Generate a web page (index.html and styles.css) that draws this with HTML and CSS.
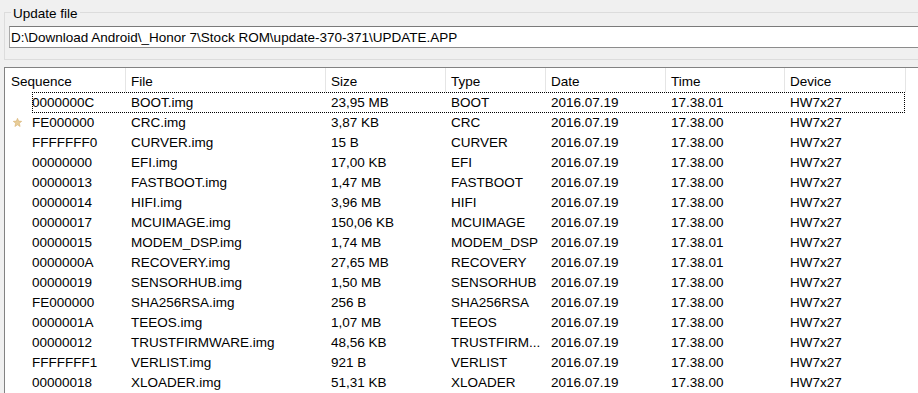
FILE: index.html
```html
<!DOCTYPE html>
<html lang="en">
<head>
  <meta charset="UTF-8" />
  <meta name="viewport" content="width=device-width, initial-scale=1.0"/>
  <title>Update file</title>
  <link rel="stylesheet" href="styles.css">
</head>
<body>
  <fieldset class="file-group">
    <legend>Update file</legend>
    <input type="text" class="file-path" value="D:\Download Android\_Honor 7\Stock ROM\update-370-371\UPDATE.APP" readonly />
  </fieldset>

  <div class="list-view">
    <div class="list-row list-head">
      <div class="col first">Sequence</div>
      <div class="col">File</div>
      <div class="col">Size</div>
      <div class="col">Type</div>
      <div class="col">Date</div>
      <div class="col">Time</div>
      <div class="col">Device</div>
      <div class="col filler"></div>
    </div>

    <div class="list-row focused">
      <div class="col first"><span class="mark"></span>0000000C</div>
      <div class="col">BOOT.img</div>
      <div class="col">23,95 MB</div>
      <div class="col">BOOT</div>
      <div class="col">2016.07.19</div>
      <div class="col">17.38.01</div>
      <div class="col">HW7x27</div>
    </div>
    <div class="list-row">
      <div class="col first">
        <span class="mark">
          <svg width="9" height="9" viewBox="0 0 10 10"><polygon points="5,0.3 6.3,3.4 9.7,3.7 7.1,5.9 7.9,9.5 5,7.6 2.1,9.5 2.9,5.9 0.3,3.7 3.7,3.4" fill="#e8cd98" stroke="#d4ad6c" stroke-width="0.6"/></svg>
        </span>FE000000</div>
      <div class="col">CRC.img</div>
      <div class="col">3,87 KB</div>
      <div class="col">CRC</div>
      <div class="col">2016.07.19</div>
      <div class="col">17.38.00</div>
      <div class="col">HW7x27</div>
    </div>
    <div class="list-row">
      <div class="col first"><span class="mark"></span>FFFFFFF0</div>
      <div class="col">CURVER.img</div>
      <div class="col">15 B</div>
      <div class="col">CURVER</div>
      <div class="col">2016.07.19</div>
      <div class="col">17.38.00</div>
      <div class="col">HW7x27</div>
    </div>
    <div class="list-row">
      <div class="col first"><span class="mark"></span>00000000</div>
      <div class="col">EFI.img</div>
      <div class="col">17,00 KB</div>
      <div class="col">EFI</div>
      <div class="col">2016.07.19</div>
      <div class="col">17.38.00</div>
      <div class="col">HW7x27</div>
    </div>
    <div class="list-row">
      <div class="col first"><span class="mark"></span>00000013</div>
      <div class="col">FASTBOOT.img</div>
      <div class="col">1,47 MB</div>
      <div class="col">FASTBOOT</div>
      <div class="col">2016.07.19</div>
      <div class="col">17.38.00</div>
      <div class="col">HW7x27</div>
    </div>
    <div class="list-row">
      <div class="col first"><span class="mark"></span>00000014</div>
      <div class="col">HIFI.img</div>
      <div class="col">3,96 MB</div>
      <div class="col">HIFI</div>
      <div class="col">2016.07.19</div>
      <div class="col">17.38.00</div>
      <div class="col">HW7x27</div>
    </div>
    <div class="list-row">
      <div class="col first"><span class="mark"></span>00000017</div>
      <div class="col">MCUIMAGE.img</div>
      <div class="col">150,06 KB</div>
      <div class="col">MCUIMAGE</div>
      <div class="col">2016.07.19</div>
      <div class="col">17.38.00</div>
      <div class="col">HW7x27</div>
    </div>
    <div class="list-row">
      <div class="col first"><span class="mark"></span>00000015</div>
      <div class="col">MODEM_DSP.img</div>
      <div class="col">1,74 MB</div>
      <div class="col">MODEM_DSP</div>
      <div class="col">2016.07.19</div>
      <div class="col">17.38.01</div>
      <div class="col">HW7x27</div>
    </div>
    <div class="list-row">
      <div class="col first"><span class="mark"></span>0000000A</div>
      <div class="col">RECOVERY.img</div>
      <div class="col">27,65 MB</div>
      <div class="col">RECOVERY</div>
      <div class="col">2016.07.19</div>
      <div class="col">17.38.01</div>
      <div class="col">HW7x27</div>
    </div>
    <div class="list-row">
      <div class="col first"><span class="mark"></span>00000019</div>
      <div class="col">SENSORHUB.img</div>
      <div class="col">1,50 MB</div>
      <div class="col">SENSORHUB</div>
      <div class="col">2016.07.19</div>
      <div class="col">17.38.00</div>
      <div class="col">HW7x27</div>
    </div>
    <div class="list-row">
      <div class="col first"><span class="mark"></span>FE000000</div>
      <div class="col">SHA256RSA.img</div>
      <div class="col">256 B</div>
      <div class="col">SHA256RSA</div>
      <div class="col">2016.07.19</div>
      <div class="col">17.38.00</div>
      <div class="col">HW7x27</div>
    </div>
    <div class="list-row">
      <div class="col first"><span class="mark"></span>0000001A</div>
      <div class="col">TEEOS.img</div>
      <div class="col">1,07 MB</div>
      <div class="col">TEEOS</div>
      <div class="col">2016.07.19</div>
      <div class="col">17.38.00</div>
      <div class="col">HW7x27</div>
    </div>
    <div class="list-row">
      <div class="col first"><span class="mark"></span>00000012</div>
      <div class="col">TRUSTFIRMWARE.img</div>
      <div class="col">48,56 KB</div>
      <div class="col" title="TRUSTFIRMWARE">TRUSTFIRM...</div>
      <div class="col">2016.07.19</div>
      <div class="col">17.38.00</div>
      <div class="col">HW7x27</div>
    </div>
    <div class="list-row">
      <div class="col first"><span class="mark"></span>FFFFFFF1</div>
      <div class="col">VERLIST.img</div>
      <div class="col">921 B</div>
      <div class="col">VERLIST</div>
      <div class="col">2016.07.19</div>
      <div class="col">17.38.00</div>
      <div class="col">HW7x27</div>
    </div>
    <div class="list-row">
      <div class="col first"><span class="mark"></span>00000018</div>
      <div class="col">XLOADER.img</div>
      <div class="col">51,31 KB</div>
      <div class="col">XLOADER</div>
      <div class="col">2016.07.19</div>
      <div class="col">17.38.00</div>
      <div class="col">HW7x27</div>
    </div>
  </div>
</body>
</html>
```

FILE: styles.css
```css
body {
  font-family: "Liberation Sans", Arial, sans-serif;
  font-size: 13.5px;
  color: #000;
  background-color: #f0f0f0;
  margin: 0;
  overflow: hidden;
  height: 393px;
}

.file-group {
  margin: 0 -10px 0 4px;
  padding: 2px 0 11px 4px;
  border: 1px solid #dcdcdc;
  min-width: 0;
}

.file-group legend {
  margin-left: 2px;
  padding: 3px 2px 0;
  line-height: 21px;
}

.file-path {
  display: block;
  box-sizing: border-box;
  width: 100%;
  height: 22px;
  margin: 0;
  padding: 1px 0 0 1px;
  font: inherit;
  color: #000;
  background: #fff;
  border: 1px solid #a9a9a9;
  border-top-color: #7a7a7a;
  border-bottom-color: #8c8c8c;
  outline: none;
}

.list-view {
  margin: 7px -10px 0 4px;
  border: 1px solid #828282;
  background-color: #fff;
  height: 400px;
}

.list-row {
  position: relative;
  display: grid;
  grid-template-columns: 121px 200px 120px 100px 120px 119px 121px 1fr;
  height: 20px;
  line-height: 22px;
}

.list-row .col {
  padding-left: 5px;
  white-space: nowrap;
  overflow: hidden;
}

.list-row .col.first {
  display: flex;
  padding-left: 8px;
}

.mark {
  flex: 0 0 19px;
  display: flex;
  align-items: center;
  height: 20px;
}

.list-head {
  height: 24px;
  line-height: 27px;
}

.list-head .col {
  border-right: 1px solid #e5e5e5;
}

.list-head .col.first {
  padding-left: 6px;
}

.list-head .col.filler {
  border-right: none;
}

.list-row.focused::after {
  content: '';
  position: absolute;
  left: 27px;
  top: 0;
  width: 873px;
  height: 21px;
  box-sizing: border-box;
  border: 1px dotted #000;
}
```
